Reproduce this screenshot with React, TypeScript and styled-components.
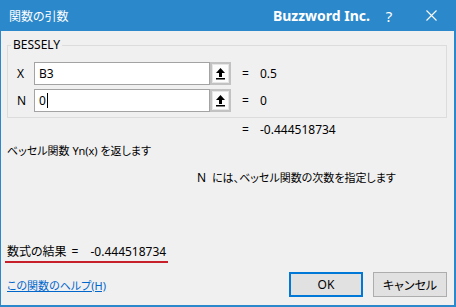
import React from "react";
import styled, { createGlobalStyle } from "styled-components";

const BLUE = "#2b88ca";

const Global = createGlobalStyle`
  html, body { margin: 0; padding: 0; background: #f0f0f0; }
  body { font-family: "Noto Sans", "Noto Sans CJK JP", sans-serif; }
`;

const Window = styled.div`
  width: 456px;
  height: 307px;
  box-sizing: border-box;
  border: solid ${BLUE};
  border-width: 0 2px 2px 1px;
  display: flex;
  flex-direction: column;
  background: #f0f0f0;
  font-family: "Noto Sans", "Noto Sans CJK JP", sans-serif;
  font-size: 12px;
  color: #000;
  font-feature-settings: "palt" 1;
`;

const TitleBar = styled.div`
  flex: none;
  height: 31px;
  background: ${BLUE};
  color: #fff;
  display: flex;
  align-items: center;
`;

const Title = styled.div`
  padding-left: 8px;
  font-size: 12px;
`;

const Brand = styled.div`
  margin-left: auto;
  font-size: 14px;
  font-weight: 700;
  font-family: "Noto Sans", sans-serif;
`;

const HelpButton = styled.div`
  width: 38px;
  text-align: center;
  font-size: 15px;
`;

const CloseButton = styled.div`
  width: 46px;
  height: 31px;
  display: flex;
  align-items: center;
  justify-content: center;
`;

const Body = styled.div`
  flex: 1;
  display: flex;
  flex-direction: column;
  padding: 7px 7px 8px 6px;
  min-height: 0;
`;

const Group = styled.fieldset`
  margin: 0;
  padding: 10px 6px 5px 3px;
  border: 1px solid #dcdcdc;
  min-width: 0;
`;

const Legend = styled.legend`
  padding: 0 2px;
  font-size: 12px;
  line-height: 14px;
`;

const Row = styled.div`
  display: flex;
  align-items: center;
  height: 23px;
  & + & {
    margin-top: 4px;
  }
`;

const ArgLabel = styled.div`
  box-sizing: border-box;
  width: 23px;
  padding-left: 6px;
`;

const Field = styled.div`
  box-sizing: border-box;
  width: 176px;
  height: 23px;
  border: 1px solid #a3a3a3;
  background: #fff;
  padding-left: 4px;
  display: flex;
  align-items: center;
`;

const Caret = styled.span`
  display: inline-block;
  width: 1px;
  height: 15px;
  background: #000;
  margin-left: 1px;
`;

const RefButton = styled.div`
  box-sizing: border-box;
  width: 21px;
  height: 23px;
  background: #fcfcfc;
  border: 2px solid #c2c2c2;
  box-shadow: inset 0 0 0 1px #e6e6e6;
  display: flex;
  align-items: center;
  justify-content: center;
`;

const Eq = styled.span`
  display: inline-block;
  margin-left: 11px;
  width: 18px;
`;

const ResultLine = styled.div`
  margin-top: 4px;
  padding-left: 235px;
  line-height: 16px;
`;

const ResultEq = styled.span`
  display: inline-block;
  width: 18px;
`;

const Description = styled.div`
  margin-top: 5px;
  line-height: 16px;
  font-size: 11px;
`;

const ArgDesc = styled.div`
  margin-top: 11px;
  padding-left: 190px;
  line-height: 16px;
  font-size: 11px;
`;

const ArgName = styled.span`
  display: inline-block;
  width: 15px;
  font-size: 12px;
`;

const Formula = styled.div`
  margin-top: auto;
  align-self: flex-start;
  margin-left: -2px;
  padding: 0 2px 1px 2px;
  border-bottom: 2px solid #c8202a;
  line-height: 16px;
  display: flex;
`;

const FormulaEq = styled.span`
  margin-left: 5px;
  margin-right: 12px;
`;

const Footer = styled.div`
  margin-top: 9px;
  display: flex;
  align-items: center;
  height: 25px;
`;

const HelpLink = styled.a`
  color: #0066cc;
  text-decoration: underline;
  margin-right: auto;
  cursor: pointer;
  font-size: 11px;
`;

const Button = styled.button<{ $primary?: boolean }>`
  box-sizing: border-box;
  width: 74px;
  height: 25px;
  background: #e1e1e1;
  border: ${(p) => (p.$primary ? "2px solid #0078d7" : "1px solid #adadad")};
  font-family: inherit;
  font-size: 12px;
  font-feature-settings: "palt" 1;
  color: #000;
  padding: 0;
  & + & {
    margin-left: 10px;
  }
`;

const UpArrow = () => (
  <svg width="11" height="13" viewBox="0 0 11 13">
    <polygon points="5.5,1 1,6 10,6" fill="#000" />
    <rect x="4" y="6" width="3" height="4" fill="#000" />
    <rect x="1" y="11" width="9" height="1.5" fill="#000" />
  </svg>
);

const CloseIcon = () => (
  <svg width="11" height="11" viewBox="0 0 11 11">
    <path d="M0.5 0.5 L10.5 10.5 M10.5 0.5 L0.5 10.5" stroke="#fff" strokeWidth="1.1" />
  </svg>
);

export default function App() {
  return (
    <>
      <Global />
      <Window>
        <TitleBar>
          <Title>関数の引数</Title>
          <Brand>Buzzword Inc.</Brand>
          <HelpButton>?</HelpButton>
          <CloseButton>
            <CloseIcon />
          </CloseButton>
        </TitleBar>
        <Body>
          <Group>
            <Legend>BESSELY</Legend>
            <Row>
              <ArgLabel>X</ArgLabel>
              <Field>B3</Field>
              <RefButton>
                <UpArrow />
              </RefButton>
              <Eq>=</Eq>
              <span>0.5</span>
            </Row>
            <Row>
              <ArgLabel>N</ArgLabel>
              <Field>
                0<Caret />
              </Field>
              <RefButton>
                <UpArrow />
              </RefButton>
              <Eq>=</Eq>
              <span>0</span>
            </Row>
          </Group>
          <ResultLine>
            <ResultEq>=</ResultEq>-0.444518734
          </ResultLine>
          <Description>ベッセル関数 Yn(x) を返します</Description>
          <ArgDesc>
            <ArgName>N</ArgName>には、ベッセル関数の次数を指定します
          </ArgDesc>
          <Formula>
            <span>数式の結果</span>
            <FormulaEq>=</FormulaEq>
            <span>-0.444518734</span>
          </Formula>
          <Footer>
            <HelpLink>この関数のヘルプ(H)</HelpLink>
            <Button $primary>OK</Button>
            <Button>キャンセル</Button>
          </Footer>
        </Body>
      </Window>
    </>
  );
}
